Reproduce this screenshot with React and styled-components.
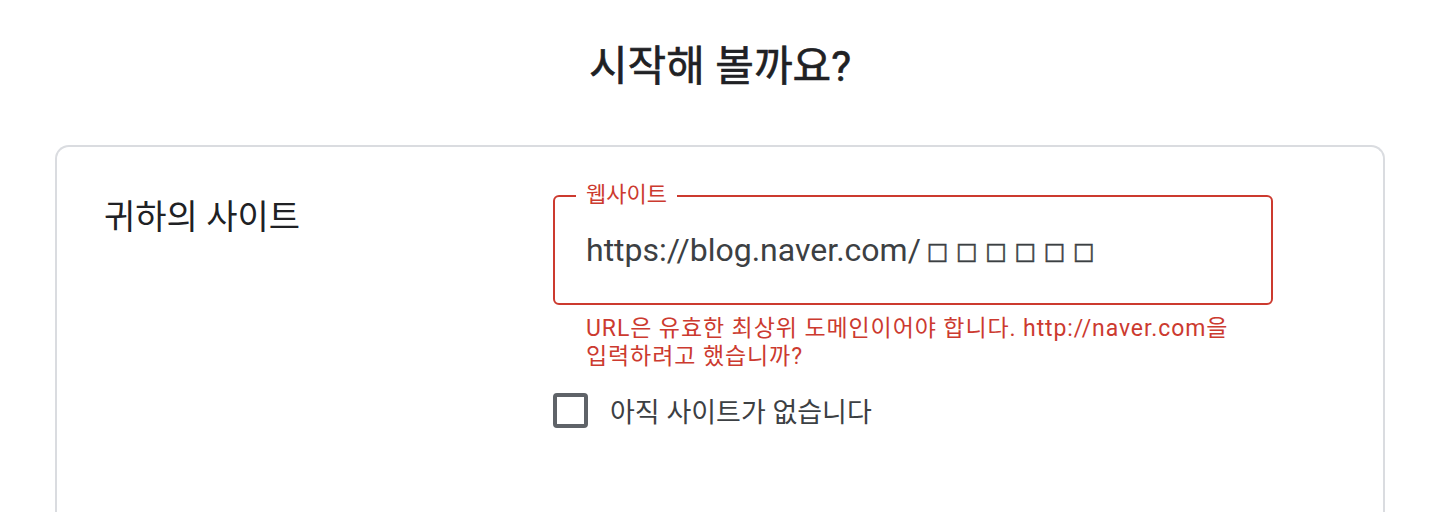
import React from 'react';
import styled, { createGlobalStyle } from 'styled-components';

const GlobalStyle = createGlobalStyle`
  body {
    margin: 0;
    background: #ffffff;
    font-family: Roboto, "Noto Sans CJK KR", sans-serif;
    color: #202124;
  }
`;

const Page = styled.div`
  padding: 0 47px 0 55px;
`;

const Title = styled.h1`
  margin: 0;
  padding-top: 44px;
  height: 145px;
  box-sizing: border-box;
  text-align: center;
  font-size: 42px;
  line-height: 46px;
  font-weight: 400;
  -webkit-text-stroke: 0.6px #202124;
  color: #202124;
`;

const Card = styled.div`
  box-sizing: border-box;
  height: 367px;
  border: 2px solid #dadce0;
  border-bottom: none;
  border-radius: 14px 14px 0 0;
  padding: 48px 0 0 47px;
  display: grid;
  grid-template-columns: 449px 720px;
  align-items: start;
`;

const SectionLabel = styled.div`
  font-size: 34px;
  line-height: 44px;
  color: #202124;
`;

const FieldColumn = styled.div`
  display: flex;
  flex-direction: column;
`;

const Outline = styled.div`
  position: relative;
  height: 110px;
  box-sizing: border-box;
  border: 2px solid #cc3a2f;
  border-radius: 6px;
  display: flex;
  align-items: center;
  padding: 0 31px;
`;

const Legend = styled.span`
  position: absolute;
  top: -14px;
  left: 21px;
  padding: 0 10px;
  background: #ffffff;
  font-size: 22px;
  line-height: 24px;
  color: #cc3a2f;
`;

const Value = styled.div`
  font-size: 32px;
  color: #3c4043;
  white-space: nowrap;
`;

const Tofu = styled.span`
  font-family: "DejaVu Sans", sans-serif;
  font-size: 23px;
  letter-spacing: 7.5px;
  margin-left: 6px;
  vertical-align: 2px;
  -webkit-text-stroke: 0.5px #3c4043;
`;

const Helper = styled.div`
  margin: 10px 0 0 33px;
  font-size: 23px;
  line-height: 28px;
  letter-spacing: 0.9px;
  word-break: keep-all;
  color: #cc3a2f;
  max-width: 660px;
`;

const CheckRow = styled.label`
  display: flex;
  align-items: center;
  gap: 22px;
  margin-top: 20px;
  font-size: 27px;
  color: #3c4043;
`;

const Box = styled.span`
  width: 35px;
  height: 35px;
  box-sizing: border-box;
  border: 4px solid #5f6368;
  border-radius: 4px;
  flex: none;
`;

export default function App() {
  return (
    <Page>
      <GlobalStyle />
      <Title>시작해 볼까요?</Title>
      <Card>
        <SectionLabel>귀하의 사이트</SectionLabel>
        <FieldColumn>
          <Outline>
            <Legend>웹사이트</Legend>
            <Value>
              https://blog.naver.com/<Tofu>□□□□□□</Tofu>
            </Value>
          </Outline>
          <Helper>
            URL은 유효한 최상위 도메인이어야 합니다. http://naver.com을 입력하려고 했습니까?
          </Helper>
          <CheckRow>
            <Box />
            아직 사이트가 없습니다
          </CheckRow>
        </FieldColumn>
      </Card>
    </Page>
  );
}
